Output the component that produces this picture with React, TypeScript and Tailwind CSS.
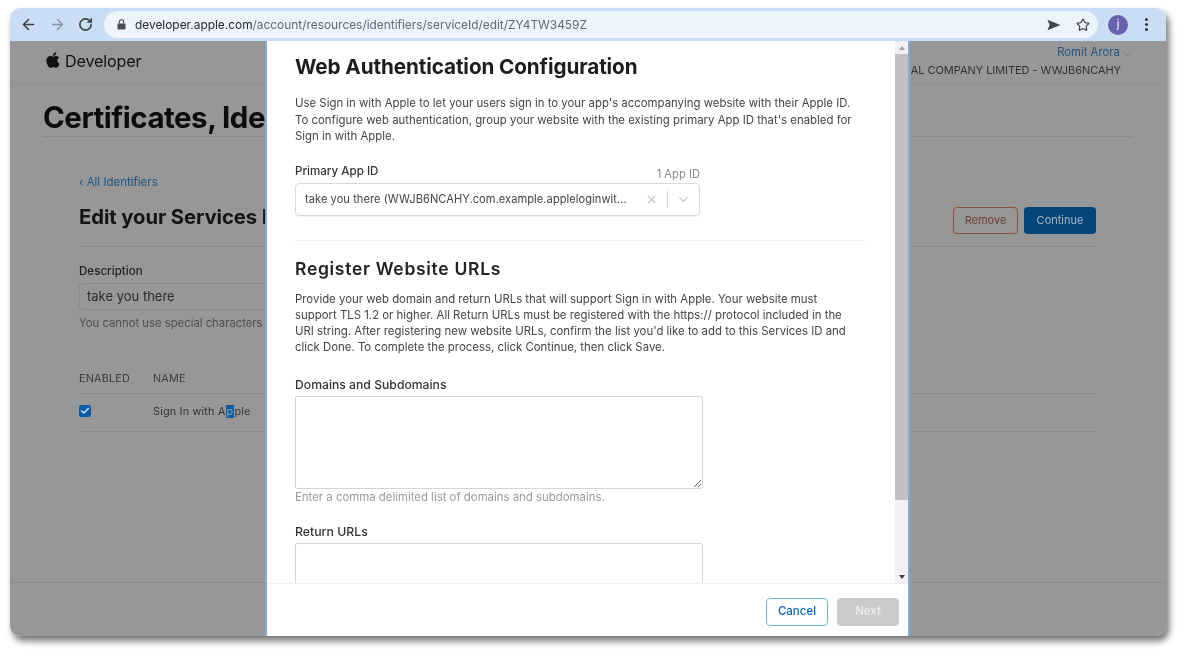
import { ArrowLeft, ArrowRight, RotateCw, Star, X, ChevronDown, Check } from "lucide-react";
import { FaApple } from "react-icons/fa";

function Send() {
  return (
    <svg width="14" height="12" viewBox="0 0 14 12" className="text-[#44474a]">
      <path d="M0.5 0.8 L13.5 6 L0.5 11.2 L2.6 6 Z" fill="currentColor" />
    </svg>
  );
}

function Lock() {
  return (
    <svg width="9" height="11" viewBox="0 0 9 11" className="text-[#4a4d51]">
      <rect x="0.5" y="4.5" width="8" height="6" rx="1" fill="currentColor" />
      <path d="M2.3 4.5V3a2.2 2.2 0 0 1 4.4 0v1.5" fill="none" stroke="currentColor" strokeWidth="1.1" />
    </svg>
  );
}

function Toolbar() {
  return (
    <div className="h-[33px] shrink-0 bg-[#c9ddf4] flex items-center pl-[10px] pr-[17px]">
      <ArrowLeft size={17} strokeWidth={2.2} className="text-[#3c4043] shrink-0" />
      <ArrowRight size={17} strokeWidth={2} className="ml-[12px] text-[#8493a6] shrink-0" />
      <RotateCw size={15} strokeWidth={2.6} className="ml-[12px] text-[#3c4043] shrink-0" />
      <div className="ml-[11px] h-[27px] w-[994px] shrink-0 rounded-full bg-[#eef4fc] flex items-center pl-[13px] pr-[8px]">
        <Lock />
        <div className="ml-[9px] text-[11.9px] whitespace-nowrap text-[#5c6b7c]">
          <span className="text-[#24282c]">developer.apple.com</span>/account/resources/identifiers/serviceId/edit/ZY4TW3459Z
        </div>
        <div className="ml-auto flex items-center gap-[15px]">
          <Send />
          <Star size={14} strokeWidth={2} className="text-[#3c4043]" />
        </div>
      </div>
      <div className="ml-[10px] w-[20px] h-[20px] rounded-full bg-[#6a61ae] text-white text-[11px] flex items-center justify-center shrink-0">
        j
      </div>
      <div className="ml-[17px] flex flex-col gap-[2px] shrink-0">
        <span className="w-[3px] h-[3px] rounded-full bg-[#33373b]" />
        <span className="w-[3px] h-[3px] rounded-full bg-[#33373b]" />
        <span className="w-[3px] h-[3px] rounded-full bg-[#33373b]" />
      </div>
    </div>
  );
}

function PageBehind() {
  return (
    <div className="h-[595px] bg-[#979797] flex flex-col overflow-hidden">
      <div className="h-[44px] shrink-0 border-b border-[#8f8f8f] flex justify-between pl-[34px] pr-[35px]">
        <div className="flex items-center gap-[3px] h-[42px] text-[#111] pb-[1px]">
          <FaApple size={18} className="-mt-[4px]" />
          <span className="text-[16.2px] tracking-[-0.2px]">Developer</span>
        </div>
        <div className="flex flex-col items-end pt-[4px]">
          <div className="text-[11.3px] leading-[15px] text-[#1c5480]">
            Romit Arora <span className="text-[#6b7a85]">⌵</span>
          </div>
          <div className="mt-[3px] mr-[10px] text-[11px] leading-[15px] tracking-[-0.05px] text-[#333] whitespace-nowrap">
            COMMERCIAL COMPANY LIMITED - WWJB6NCAHY
          </div>
        </div>
      </div>
      <div className="pl-[33px] pr-[34px]">
        <div className="h-[52px] border-b border-[#8a8a8a] flex items-end">
          <h1 className="text-[29.5px] leading-[40px] -mb-[1px] font-bold tracking-[-0.5px] text-[#0c0c0c] whitespace-nowrap">
            Certificates, Identifiers &amp; Profiles
          </h1>
        </div>
      </div>
      <div className="pl-[69px] pr-[70px]">
        <div className="mt-[38px] text-[11.5px] leading-[15px] text-[#1c5480]">‹ All Identifiers</div>
        <div className="mt-[13px] h-[44px] border-b border-[#8a8a8a] flex justify-between">
          <h2 className="text-[20.3px] leading-[28px] font-bold tracking-[-0.1px] text-[#141414] whitespace-nowrap">
            Edit your Services ID Configuration
          </h2>
          <div className="flex gap-[6px] mt-[4px]">
            <div className="w-[65px] h-[27px] rounded-[4px] border border-[#8a5038] text-[#6b3f2e] text-[11px] flex items-center justify-center">
              Remove
            </div>
            <div className="w-[72px] h-[27px] rounded-[4px] bg-[#03467a] text-[#a9b7c4] text-[11px] flex items-center justify-center">
              Continue
            </div>
          </div>
        </div>
        <div className="mt-[17px] text-[11.6px] leading-[15px] font-medium text-[#222]">Description</div>
        <div className="mt-[4px] h-[27px] w-[400px] rounded-[3px] border border-[#8a8a8a] px-[7px] flex items-center text-[13px] text-[#2a2a2a]">
          take you there
        </div>
        <div className="mt-[6px] text-[11.3px] leading-[15px] text-[#4f4f4f] whitespace-nowrap">
          You cannot use special characters such as @, &amp;, *, '
        </div>
        <div className="mt-[40px] h-[23px] border-b border-[#8c8c8c] flex text-[10.8px] tracking-[0.2px] text-[#3c3c3c]">
          <span className="w-[74px] leading-[15px]">ENABLED</span>
          <span className="leading-[15px]">NAME</span>
        </div>
        <div className="h-[38px] border-b border-[#8c8c8c] flex items-center pb-[1px]">
          <div className="w-[74px]">
            <div className="w-[12px] h-[12px] rounded-[2px] bg-[#0a5da5] flex items-center justify-center -mt-[2px]">
              <Check size={10} strokeWidth={3.5} className="text-[#d8e4ef]" />
            </div>
          </div>
          <div className="text-[10.8px] tracking-[0.2px] text-[#333] whitespace-nowrap">
            Sign In with A<span className="bg-[#0a5da5] text-[#89a7c0] px-[1px]">p</span>ple
          </div>
        </div>
      </div>
      <div className="mt-auto mb-[53px] border-t border-[#8c8c8c]" />
    </div>
  );
}

function Modal() {
  return (
    <div className="absolute left-[255px] top-[33px] w-[645px] h-[595px] bg-white border-x-2 border-[#84aad4] flex flex-col">
      <div className="flex-1 min-h-0 flex overflow-hidden">
        <div className="flex-1 pl-[28px] pr-[30px] overflow-hidden">
          <h2 className="mt-[11px] text-[20.7px] leading-[30px] font-bold tracking-[-0.1px] text-[#1d1d1f] whitespace-nowrap">
            Web Authentication Configuration
          </h2>
          <p className="mt-[13px] text-[11.4px] leading-[16.5px] text-[#444] whitespace-nowrap">
            Use Sign in with Apple to let your users sign in to your app's accompanying website with their Apple ID.
            <br />
            To configure web authentication, group your website with the existing primary App ID that's enabled for
            <br />
            Sign in with Apple.
          </p>
          <div className="mt-[18px] w-[405px] flex justify-between items-end">
            <span className="text-[11.6px] leading-[16px] font-medium text-[#333]">Primary App ID</span>
            <span className="text-[11.2px] leading-[14px] text-[#8a8a8a] -mb-[2px]">1 App ID</span>
          </div>
          <div className="mt-[4px] w-[405px] h-[33px] rounded-[4px] border border-[#d9d9d9] shadow-[0_1px_1px_rgba(0,0,0,0.06)] flex items-center pl-[9px]">
            <span className="text-[11.1px] tracking-[0.05px] text-[#444] whitespace-nowrap">
              take you there (WWJB6NCAHY.com.example.appleloginwit...
            </span>
            <X size={13} strokeWidth={2} className="ml-auto text-[#c4c4c4]" />
            <span className="ml-[9px] w-px h-[17px] bg-[#d4d4d4]" />
            <ChevronDown size={15} className="mx-[8px] text-[#c4c4c4]" />
          </div>
          <div className="mt-[24px] w-[570px] border-t border-[#f0f0f0]" />
          <h3 className="mt-[16px] text-[17.5px] leading-[24px] font-semibold tracking-[0.7px] text-[#222] whitespace-nowrap">
            Register Website URLs
          </h3>
          <p className="mt-[10px] text-[11.4px] leading-[16px] text-[#444] whitespace-nowrap">
            Provide your web domain and return URLs that will support Sign in with Apple. Your website must
            <br />
            support TLS 1.2 or higher. All Return URLs must be registered with the https:// protocol included in the
            <br />
            URI string. After registering new website URLs, confirm the list you'd like to add to this Services ID and
            <br />
            click Done. To complete the process, click Continue, then click Save.
          </p>
          <div className="mt-[22px] text-[12.2px] leading-[16px] font-medium text-[#333]">Domains and Subdomains</div>
          <textarea
            readOnly
            className="block mt-[3px] w-[408px] h-[93px] rounded-[2px] border border-[#d4d4d4] outline-none"
          />
          <div className="text-[11.4px] leading-[16px] text-[#9a9a9a]">
            Enter a comma delimited list of domains and subdomains.
          </div>
          <div className="mt-[19px] text-[12.3px] leading-[16px] font-medium text-[#333]">Return URLs</div>
          <div className="mt-[3px] w-[408px] h-[93px] rounded-[2px] border border-[#d4d4d4]" />
        </div>
        <div className="w-[13px] shrink-0 bg-[#f1f1f1] flex flex-col items-center">
          <div className="h-[13px] flex items-center justify-center">
            <span className="w-0 h-0 border-x-[3px] border-x-transparent border-b-[4px] border-b-[#a3a3a3]" />
          </div>
          <div className="w-full h-[446px] bg-[#c1c1c1]" />
          <div className="mt-auto h-[13px] flex items-center justify-center">
            <span className="w-0 h-0 border-x-[3px] border-x-transparent border-t-[4px] border-t-[#404040]" />
          </div>
        </div>
      </div>
      <div className="h-[53px] shrink-0 border-t border-[#efefef] flex items-center justify-end gap-[9px] pr-[9px] pt-[3px]">
        <div className="w-[62px] h-[28px] rounded-[4px] border-[1.5px] border-[#6fb2ea] text-[#0a63b8] text-[11.5px] font-medium flex items-center justify-center">
          Cancel
        </div>
        <div className="w-[62px] h-[28px] rounded-[4px] bg-[#cbcbcb] text-[#eeeeee] text-[11.5px] font-medium flex items-center justify-center">
          Next
        </div>
      </div>
    </div>
  );
}

export default function App() {
  return (
    <div className="w-[1186px] h-[658px] bg-white overflow-hidden pl-[10px] pt-[8px] font-['Inter','Liberation_Sans',sans-serif]">
      <div className="w-[1156px] h-[628px] rounded-[10px] shadow-[3px_5px_7px_rgba(0,0,0,0.55)] blur-[0.4px]">
        <div className="relative h-full rounded-[10px] overflow-hidden">
          <Toolbar />
          <PageBehind />
          <Modal />
        </div>
      </div>
    </div>
  );
}
